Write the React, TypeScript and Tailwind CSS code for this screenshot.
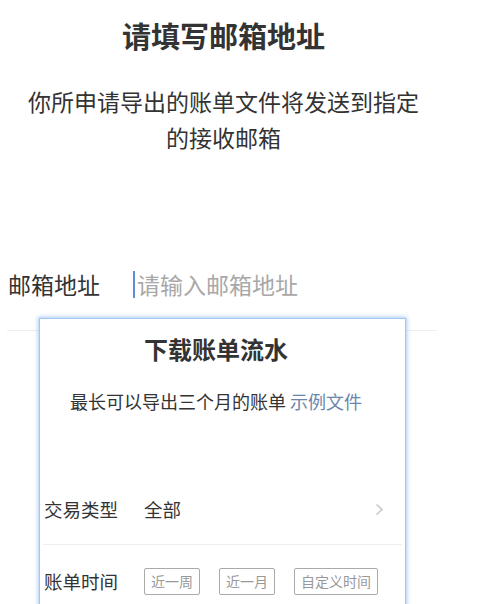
const FONT = "font-['Noto_Sans_CJK_SC','Noto_Sans',sans-serif]";

const RANGES = ['近一周', '近一月', '自定义时间'];

function ExportCard() {
  return (
    <div className="absolute left-[39px] top-[318px] h-[320px] w-[367px] border border-[#9fc8f6] bg-white shadow-[0_0_4px_1px_rgba(130,180,245,0.7)]">
      <div className="pr-[13px] pt-[14px] text-center text-[24px] font-bold leading-[32px] text-[#333]">
        下载账单流水
      </div>
      <div className="mt-[22px] pr-[13px] text-center text-[18px] leading-[28px] text-[#333]">
        最长可以导出三个月的账单 <span className="text-[#6b86aa]">示例文件</span>
      </div>

      <div className="mx-[3px] mt-[78px] flex h-[52px] items-start border-b border-[#eee] pl-[1px] pr-[18px]">
        <span className="w-[100px] text-[18.5px] leading-[32px] text-[#333]">交易类型</span>
        <span className="flex-1 text-[18.5px] leading-[32px] text-[#333]">全部</span>
        <svg className="mt-[10px]" width="9" height="13" viewBox="0 0 9 13" fill="none" aria-hidden="true">
          <path d="M1.5 1.5 7 6.5 1.5 11.5" stroke="#c8c8c8" strokeWidth="1.6" />
        </svg>
      </div>

      <div className="mx-[3px] mt-[23px] flex items-center pl-[1px]">
        <span className="w-[100px] text-[18.5px] text-[#333]">账单时间</span>
        <div className="flex gap-[19px]">
          {RANGES.map((r) => (
            <span
              key={r}
              className="flex h-[27px] items-center rounded-[2px] border border-[#aaa] px-[6px] text-[14px] text-[#999]"
            >
              {r}
            </span>
          ))}
        </div>
      </div>
    </div>
  );
}

export default function App() {
  return (
    <div className={`relative h-[604px] w-[491px] overflow-hidden bg-white ${FONT}`}>
      <div className="w-[447px]">
        <h1 className="pt-[17px] text-center text-[29px] font-bold leading-[36px] text-[#333]">
          请填写邮箱地址
        </h1>
        <p className="mt-[30px] px-[24px] text-center text-[23px] leading-[36px] text-[#333]">
          你所申请导出的账单文件将发送到指定的接收邮箱
        </p>

        <div className="ml-[7px] mr-[10px] mt-[111px] flex h-[65px] items-start border-b border-[#eee] pl-[1px]">
          <span className="h-[36px] w-[125px] text-[23px] leading-[36px] text-[#333]">邮箱地址</span>
          <div className="flex h-[36px] items-center">
            <span className="mr-[2px] h-[27px] w-[2px] bg-[#5b8fd9]" />
            <span className="text-[23px] leading-[36px] text-[#a8a8a8]">请输入邮箱地址</span>
          </div>
        </div>
      </div>

      <ExportCard />
    </div>
  );
}
